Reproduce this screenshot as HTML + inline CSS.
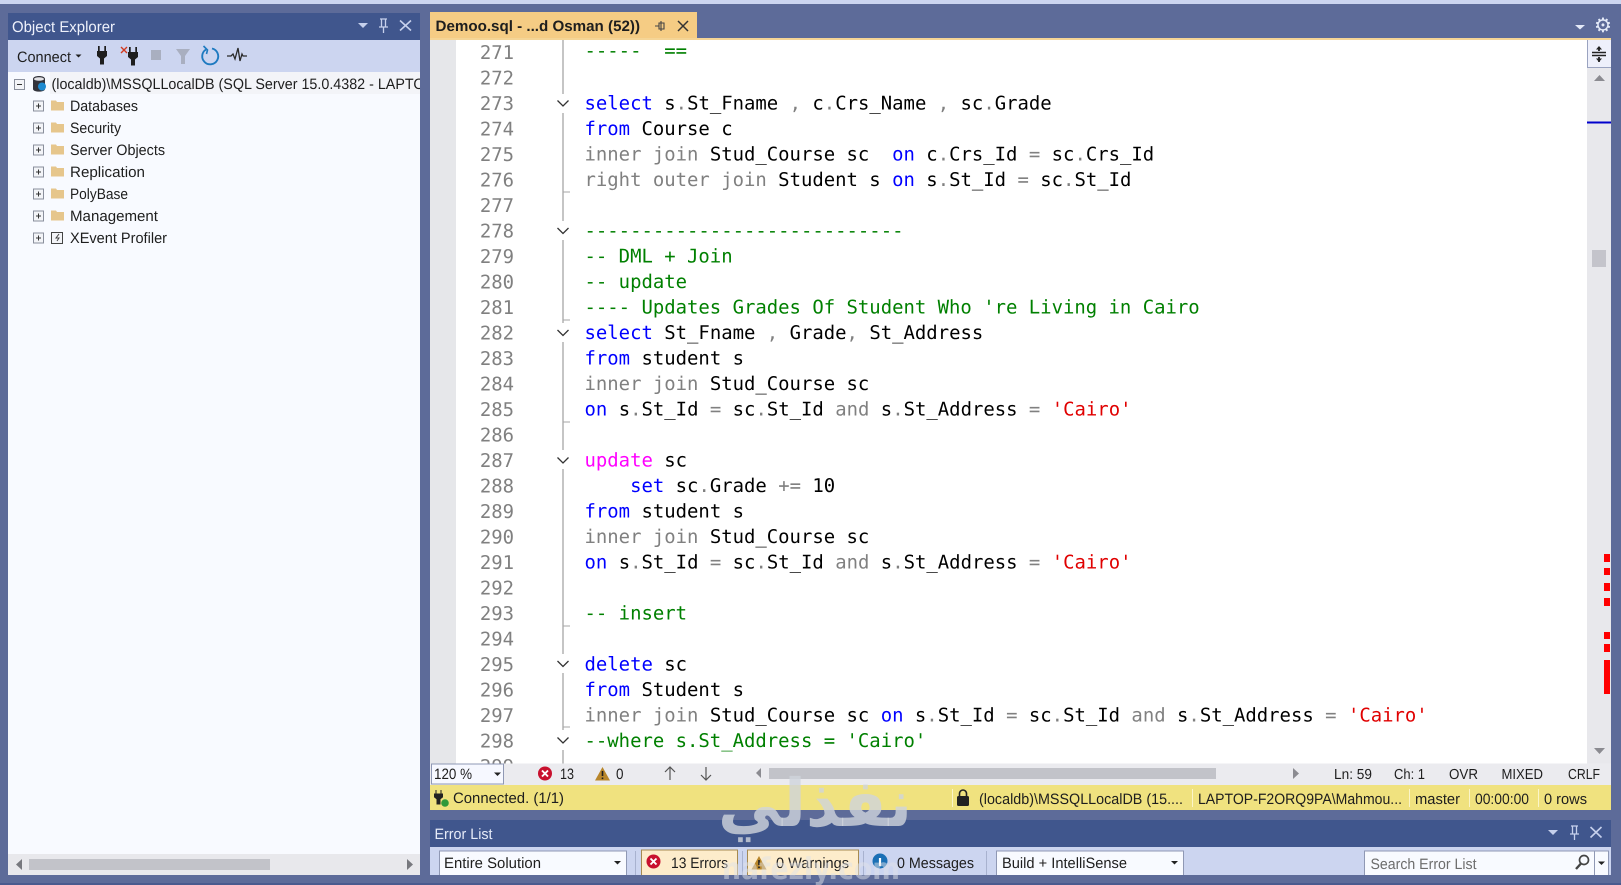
<!DOCTYPE html>
<html><head><meta charset="utf-8"><style>
html,body{margin:0;padding:0;background:#5d6b99;overflow:hidden;width:1621px;height:885px}
svg{display:block}
text{font-family:"Liberation Sans",sans-serif;font-size:15px;fill:#1e1e1e;white-space:pre;text-rendering:geometricPrecision}
.m text,text.m{font-family:"DejaVu Sans Mono","Liberation Mono",monospace;font-size:18.93px;fill:#000}
.n{fill:#808080!important;text-anchor:end}
.k{fill:#0000ff}.g{fill:#808080}.c{fill:#008000}.r{fill:#e00000}.p{fill:#ff00ff}
</style></head><body>
<svg width="1621" height="885" viewBox="0 0 1621 885" xmlns="http://www.w3.org/2000/svg">
<defs>
<clipPath id="oe"><rect x="8" y="72" width="412" height="30"/></clipPath>
<clipPath id="ed"><rect x="430" y="40" width="1157" height="723.5"/></clipPath>
<clipPath id="tb"><rect x="430" y="847" width="1181" height="28"/></clipPath>
<g id="plus"><rect x="0.5" y="0.5" width="10" height="10" fill="#f3f4f8" stroke="#8a8f9c"/><path d="M3 5.5h5M5.5 3v5" stroke="#333"/></g>
<path id="folder" d="M0 2h5l1 1.5h7v8.500H0z" fill="#e6c68c"/>
<path id="plug" d="M-4-9h1.700v5h-1.700zM2.300-9h1.700v5h-1.700zM-5-4h10v5l-3 2.500v6h-4v-6l-3-2.500z" fill="#1e1e1e"/>
<g id="err"><circle r="7" fill="#c8102e"/><path d="M-3-3L3 3M3-3L-3 3" stroke="#fff" stroke-width="1.900"/></g>
<g id="warn"><path d="M0-7L7.500 6.500H-7.500z" fill="#b8862b"/><path d="M0-3v5M0 3.500v1.600" stroke="#1e1e1e" stroke-width="1.600"/></g>
</defs>

<rect width="1621" height="885" fill="#5d6b99"/>
<rect width="1621" height="4" fill="#ccd5f0"/>
<rect y="883" width="1621" height="2" fill="#4a5a8e"/>

<!-- Object Explorer -->
<rect x="8" y="13" width="412" height="27" fill="#40568d"/>
<text x="12" y="32" textLength="103" lengthAdjust="spacingAndGlyphs" style="fill:#eef1fb;font-size:15.500px">Object Explorer</text>
<path d="M358 23h10l-5 5z" fill="#c6d0ec"/>
<path d="M380 19h7M381.500 19v8M385.500 19v8M379 27h9M383.500 27v6" stroke="#c6d0ec" stroke-width="1.300" fill="none"/>
<path d="M400 20.500l11 10M411 20.500l-11 10" stroke="#c6d0ec" stroke-width="1.600"/>
<rect x="8" y="40" width="412" height="32" fill="#ccd5f0"/>
<text x="17" y="62" textLength="54" lengthAdjust="spacingAndGlyphs">Connect</text>
<path d="M75.500 54.500h6l-3 3z" fill="#1e1e1e"/>
<use href="#plug" x="102" y="55"/>
<use href="#plug" x="133" y="56"/>
<path d="M121 47l6 6M127 47l-6 6" stroke="#d03a20" stroke-width="1.400"/>
<rect x="151" y="50" width="10" height="10" fill="#a9afc0"/>
<path d="M176 49h14l-5 7v8h-4v-8z" fill="#a9afc0"/>
<path d="M206 49.500a8 8 0 1 0 6 -1" fill="none" stroke="#1e7ac0" stroke-width="1.900"/>
<path d="M203.500 46l4 4-1 4" fill="none" stroke="#1e7ac0" stroke-width="1.600"/>
<path d="M227 56h4l2-2 2 5 3-11 2 13 2-7 1 2h4" fill="none" stroke="#2a2a2a" stroke-width="1.300"/>

<rect x="8" y="72" width="412" height="782" fill="#f8faff"/>
<rect x="50" y="72" width="370" height="22" fill="#f3f4f8"/>
<rect x="14.500" y="79.500" width="10" height="10" fill="#f3f4f8" stroke="#8a8f9c"/><path d="M17 84.500h5" stroke="#333"/>
<path d="M33 79c0-4 12-4 12 0v10c0 3.500-12 3.500-12 0z" fill="#33343c"/><ellipse cx="39" cy="79" rx="5" ry="1.800" fill="#e2e2e6"/><circle cx="42" cy="86.500" r="4" fill="#1e8ad0"/>
<g clip-path="url(#oe)"><text x="51.500" y="89" textLength="373" lengthAdjust="spacingAndGlyphs">(localdb)\MSSQLLocalDB (SQL Server 15.0.4382 - LAPTO</text></g>
<use href="#plus" x="33" y="100.500"/><use href="#folder" x="51" y="98.500"/><text x="70" y="111" textLength="68" lengthAdjust="spacingAndGlyphs">Databases</text>
<use href="#plus" x="33" y="122.500"/><use href="#folder" x="51" y="120.500"/><text x="70" y="133" textLength="51" lengthAdjust="spacingAndGlyphs">Security</text>
<use href="#plus" x="33" y="144.500"/><use href="#folder" x="51" y="142.500"/><text x="70" y="155" textLength="95" lengthAdjust="spacingAndGlyphs">Server Objects</text>
<use href="#plus" x="33" y="166.500"/><use href="#folder" x="51" y="164.500"/><text x="70" y="177" textLength="75" lengthAdjust="spacingAndGlyphs">Replication</text>
<use href="#plus" x="33" y="188.500"/><use href="#folder" x="51" y="186.500"/><text x="70" y="199" textLength="58" lengthAdjust="spacingAndGlyphs">PolyBase</text>
<use href="#plus" x="33" y="210.500"/><use href="#folder" x="51" y="208.500"/><text x="70" y="221" textLength="88" lengthAdjust="spacingAndGlyphs">Management</text>
<use href="#plus" x="33" y="232.500"/><rect x="51.500" y="232.500" width="11" height="11" fill="#f3f4f8" stroke="#444"/><path d="M59 234l-3 4h3l-2 3" fill="none" stroke="#444"/><text x="70" y="243" textLength="97" lengthAdjust="spacingAndGlyphs">XEvent Profiler</text>

<rect x="8" y="854" width="412" height="21" fill="#e8e8ec"/>
<rect x="29" y="859" width="241" height="11" fill="#c2c3c9"/>
<path d="M22 859v11l-6-5.500z" fill="#77787e"/><path d="M407 859v11l6-5.500z" fill="#77787e"/>

<!-- Tab -->
<rect x="430" y="12" width="267" height="28" fill="#f5cc84"/>
<rect x="430" y="38" width="1181" height="2" fill="#f5d596"/>
<text x="435.500" y="31" textLength="204.500" lengthAdjust="spacingAndGlyphs" style="font-weight:bold">Demoo.sql - ...d Osman (52))</text>
<path d="M655 26h4M659 23v6h5v-6zM661 21v10" fill="none" stroke="#444" stroke-width="1.100"/>
<path d="M678 21l10 10M688 21l-10 10" stroke="#333" stroke-width="1.500"/>
<path d="M1575 25h10l-5 4.500z" fill="#e4eaf8"/>
<text x="1603" y="32" text-anchor="middle" style="fill:#e4eaf8;font-size:20px;font-family:'DejaVu Sans',sans-serif">⚙</text>

<!-- Editor -->
<rect x="430" y="40" width="1157" height="724" fill="#fff"/>
<rect x="430" y="40" width="26" height="724" fill="#e6e7ea"/>
<rect x="1587" y="40" width="24" height="724" fill="#e8e8ec"/>
<rect x="1587" y="40" width="24" height="27" fill="#eef0fb"/>
<path d="M1587.500 40v27M1587 67.500h24" stroke="#9aa3c0"/>
<path d="M1592 52.500h14M1592 55.500h14" stroke="#222" stroke-width="1.500"/>
<path d="M1599 47v4M1599 57v5" stroke="#222" stroke-width="1.800"/><path d="M1596 49.500l3-3.500 3 3.500zM1596 58.500l3 3.500 3-3.500z" fill="#222"/>
<path d="M1594 81l5.500-6 5.500 6z" fill="#8b8b91"/>
<rect x="1587" y="121.500" width="24" height="2" fill="#0000cc"/>
<rect x="1592" y="250" width="14" height="17" fill="#c4c4cb"/>
<g fill="#ff0000"><rect x="1604" y="554" width="6" height="8"/><rect x="1604" y="568" width="6" height="7"/><rect x="1604" y="583" width="6" height="8"/><rect x="1604" y="598" width="6" height="8"/><rect x="1604" y="632" width="6" height="7"/><rect x="1604" y="644" width="6" height="8"/><rect x="1604" y="660" width="6" height="34"/></g>
<path d="M1594 748l5.500 6 5.500-6z" fill="#8b8b91"/>

<g clip-path="url(#ed)" class="m">
<path d="M563 40V94M563 113V221M563 240V323M563 342V450M563 469V654M563 673V730M563 750V764" stroke="#a6a6a6" stroke-width="1.300" fill="none"/>
<path d="M563 192h7M563 320h7M563 422h7M563 626h7M563 727h7" stroke="#a6a6a6"/>
<path d="M557.500 100.500l5.500 5.500 5.500-5.500M557.500 228l5.500 5.500 5.500-5.500M557.500 330l5.500 5.500 5.500-5.500M557.500 457.500l5.500 5.500 5.500-5.500M557.500 661l5.500 5.500 5.500-5.500M557.500 737.500l5.500 5.500 5.500-5.500" fill="none" stroke="#333" stroke-width="1.300"/>

<text class="n" x="514" y="59">271</text>
<text class="n" x="514" y="84.500">272</text>
<text class="n" x="514" y="110">273</text>
<text class="n" x="514" y="135.500">274</text>
<text class="n" x="514" y="161">275</text>
<text class="n" x="514" y="186.500">276</text>
<text class="n" x="514" y="212">277</text>
<text class="n" x="514" y="237.500">278</text>
<text class="n" x="514" y="263">279</text>
<text class="n" x="514" y="288.500">280</text>
<text class="n" x="514" y="314">281</text>
<text class="n" x="514" y="339.500">282</text>
<text class="n" x="514" y="365">283</text>
<text class="n" x="514" y="390.500">284</text>
<text class="n" x="514" y="416">285</text>
<text class="n" x="514" y="441.500">286</text>
<text class="n" x="514" y="467">287</text>
<text class="n" x="514" y="492.500">288</text>
<text class="n" x="514" y="518">289</text>
<text class="n" x="514" y="543.500">290</text>
<text class="n" x="514" y="569">291</text>
<text class="n" x="514" y="594.500">292</text>
<text class="n" x="514" y="620">293</text>
<text class="n" x="514" y="645.500">294</text>
<text class="n" x="514" y="671">295</text>
<text class="n" x="514" y="696.500">296</text>
<text class="n" x="514" y="722">297</text>
<text class="n" x="514" y="747.500">298</text>
<text class="n" x="514" y="773">299</text>

<text x="584.500" y="57"><tspan class="c">-----  ==</tspan></text>
<text x="584.500" y="109.300"><tspan class="k">select</tspan> s<tspan class="g">.</tspan>St_Fname <tspan class="g">,</tspan> c<tspan class="g">.</tspan>Crs_Name <tspan class="g">,</tspan> sc<tspan class="g">.</tspan>Grade</text>
<text x="584.500" y="134.800"><tspan class="k">from</tspan> Course c</text>
<text x="584.500" y="160.300"><tspan class="g">inner join</tspan> Stud_Course sc  <tspan class="k">on</tspan> c<tspan class="g">.</tspan>Crs_Id <tspan class="g">=</tspan> sc<tspan class="g">.</tspan>Crs_Id</text>
<text x="584.500" y="185.800"><tspan class="g">right outer join</tspan> Student s <tspan class="k">on</tspan> s<tspan class="g">.</tspan>St_Id <tspan class="g">=</tspan> sc<tspan class="g">.</tspan>St_Id</text>
<text x="584.500" y="236.800"><tspan class="c">----------------------------</tspan></text>
<text x="584.500" y="262.300"><tspan class="c">-- DML + Join</tspan></text>
<text x="584.500" y="287.800"><tspan class="c">-- update</tspan></text>
<text x="584.500" y="313.300"><tspan class="c">---- Updates Grades Of Student Who 're Living in Cairo</tspan></text>
<text x="584.500" y="338.800"><tspan class="k">select</tspan> St_Fname <tspan class="g">,</tspan> Grade<tspan class="g">,</tspan> St_Address</text>
<text x="584.500" y="364.300"><tspan class="k">from</tspan> student s</text>
<text x="584.500" y="389.800"><tspan class="g">inner join</tspan> Stud_Course sc</text>
<text x="584.500" y="415.300"><tspan class="k">on</tspan> s<tspan class="g">.</tspan>St_Id <tspan class="g">=</tspan> sc<tspan class="g">.</tspan>St_Id <tspan class="g">and</tspan> s<tspan class="g">.</tspan>St_Address <tspan class="g">=</tspan> <tspan class="r">'Cairo'</tspan></text>
<text x="584.500" y="466.300"><tspan class="p">update</tspan> sc</text>
<text x="584.500" y="491.800">    <tspan class="k">set</tspan> sc<tspan class="g">.</tspan>Grade <tspan class="g">+=</tspan> 10</text>
<text x="584.500" y="517.300"><tspan class="k">from</tspan> student s</text>
<text x="584.500" y="542.800"><tspan class="g">inner join</tspan> Stud_Course sc</text>
<text x="584.500" y="568.300"><tspan class="k">on</tspan> s<tspan class="g">.</tspan>St_Id <tspan class="g">=</tspan> sc<tspan class="g">.</tspan>St_Id <tspan class="g">and</tspan> s<tspan class="g">.</tspan>St_Address <tspan class="g">=</tspan> <tspan class="r">'Cairo'</tspan></text>
<text x="584.500" y="619.300"><tspan class="c">-- insert</tspan></text>
<text x="584.500" y="670.300"><tspan class="k">delete</tspan> sc</text>
<text x="584.500" y="695.800"><tspan class="k">from</tspan> Student s</text>
<text x="584.500" y="721.300"><tspan class="g">inner join</tspan> Stud_Course sc <tspan class="k">on</tspan> s<tspan class="g">.</tspan>St_Id <tspan class="g">=</tspan> sc<tspan class="g">.</tspan>St_Id <tspan class="g">and</tspan> s<tspan class="g">.</tspan>St_Address <tspan class="g">=</tspan> <tspan class="r">'Cairo'</tspan></text>
<text x="584.500" y="746.800"><tspan class="c">--where s.St_Address = 'Cairo'</tspan></text>
</g>

<!-- editor bottom bar -->
<rect x="430" y="763.500" width="1181" height="21.500" fill="#ebebef"/>
<rect x="431.500" y="764" width="72" height="20" fill="#f6f8ff" stroke="#8f98b4"/>
<text x="434" y="779" textLength="38" lengthAdjust="spacingAndGlyphs">120 %</text>
<path d="M494 772.500h7l-3.500 3.500z" fill="#222"/>
<use href="#err" x="545" y="773.500"/>
<text x="560" y="779" textLength="14" lengthAdjust="spacingAndGlyphs">13</text>
<use href="#warn" x="602.500" y="774"/>
<text x="616" y="779" textLength="7.500" lengthAdjust="spacingAndGlyphs">0</text>
<path d="M670 780v-13M665 772l5-5 5 5M706 767v13M701 775l5 5 5-5" fill="none" stroke="#555" stroke-width="1.200"/>
<path d="M761 768v10l-5-5z" fill="#8b8b91"/>
<rect x="769" y="768" width="447" height="11" fill="#c2c3c9"/>
<path d="M1293 768v11l6-5.500z" fill="#8b8b91"/>
<text x="1334" y="779" textLength="38" lengthAdjust="spacingAndGlyphs" style="font-size:14.500px">Ln: 59</text>
<text x="1394" y="779" textLength="31" lengthAdjust="spacingAndGlyphs" style="font-size:14.500px">Ch: 1</text>
<text x="1449" y="779" textLength="29" lengthAdjust="spacingAndGlyphs" style="font-size:14.500px">OVR</text>
<text x="1501.500" y="779" textLength="41.500" lengthAdjust="spacingAndGlyphs" style="font-size:14.500px">MIXED</text>
<text x="1568" y="779" textLength="32" lengthAdjust="spacingAndGlyphs" style="font-size:14.500px">CRLF</text>

<!-- yellow status -->
<rect x="430" y="785" width="1181" height="25" fill="#f0e27f"/>
<path d="M436 790v4M441 790v4M434.500 794h8v3l-2.500 2v5h-3v-5l-2.500-2z" fill="#222" stroke="#222"/>
<circle cx="445" cy="803" r="3.800" fill="#2e9a3a"/>
<text x="453" y="803" textLength="111" lengthAdjust="spacingAndGlyphs">Connected. (1/1)</text>
<path d="M952.500 789v18M1192.500 789v18M1409.500 789v18M1469.500 789v18M1538.500 789v18" stroke="#fbf5c8"/>
<rect x="957" y="796" width="12" height="10" rx="1.500" fill="#222"/><path d="M959.500 796v-2.500a3.500 3.500 0 0 1 7 0v2.500" fill="none" stroke="#222" stroke-width="1.600"/>
<text x="979" y="804" textLength="204" lengthAdjust="spacingAndGlyphs">(localdb)\MSSQLLocalDB (15....</text>
<text x="1198" y="804" textLength="204" lengthAdjust="spacingAndGlyphs">LAPTOP-F2ORQ9PA\Mahmou...</text>
<text x="1415" y="804" textLength="45" lengthAdjust="spacingAndGlyphs">master</text>
<text x="1475" y="804" textLength="54" lengthAdjust="spacingAndGlyphs">00:00:00</text>
<text x="1544" y="804" textLength="43" lengthAdjust="spacingAndGlyphs">0 rows</text>

<!-- Error list -->
<rect x="430" y="820" width="1181" height="27" fill="#40568d"/>
<text x="434.500" y="839" textLength="58" lengthAdjust="spacingAndGlyphs" style="fill:#e6ebf8">Error List</text>
<path d="M1548 830h10l-5 5z" fill="#c6d0ec"/>
<path d="M1571 826h7M1572.500 826v8M1576.500 826v8M1570 834h9M1574.500 834v6" stroke="#c6d0ec" stroke-width="1.300" fill="none"/>
<path d="M1590.500 827l11 10.500M1601.500 827l-11 10.500" stroke="#c6d0ec" stroke-width="1.600"/>
<rect x="430" y="847" width="1181" height="28" fill="#ccd5f0"/>
<g clip-path="url(#tb)">
<rect x="439.500" y="851" width="187" height="30" fill="#f8faff" stroke="#8f98b4"/>
<text x="444" y="868" textLength="97" lengthAdjust="spacingAndGlyphs">Entire Solution</text>
<path d="M614 861h7l-3.500 3.500z" fill="#222"/>
<path d="M635.500 851v24M742.500 851v24M863.500 851v24M986.500 851v24" stroke="#a8b2cf"/>
<rect x="641.500" y="850" width="96" height="30" fill="#fdeccb" stroke="#a68a50"/>
<use href="#err" x="653.500" y="861.500"/>
<text x="671" y="868" textLength="57" lengthAdjust="spacingAndGlyphs">13 Errors</text>
<rect x="747.500" y="850" width="111" height="30" fill="#fdeccb" stroke="#a68a50"/>
<use href="#warn" x="759" y="863"/>
<text x="776" y="868" textLength="73" lengthAdjust="spacingAndGlyphs">0 Warnings</text>
<circle cx="880" cy="861" r="7.500" fill="#1a6fb5"/><path d="M880 858v8" stroke="#fff" stroke-width="2.200"/>
<text x="897" y="868" textLength="77" lengthAdjust="spacingAndGlyphs">0 Messages</text>
<rect x="996.500" y="851" width="187" height="30" fill="#f8faff" stroke="#8f98b4"/>
<text x="1002" y="868" textLength="125" lengthAdjust="spacingAndGlyphs">Build + IntelliSense</text>
<path d="M1171 861h7l-3.500 3.500z" fill="#222"/>
<rect x="1364.500" y="851" width="244" height="30" fill="#f8faff" stroke="#8f98b4"/>
<text x="1370.500" y="869" textLength="106" lengthAdjust="spacingAndGlyphs" style="fill:#6d6d6d">Search Error List</text>
<circle cx="1584" cy="860" r="4.500" fill="none" stroke="#444" stroke-width="1.700"/><path d="M1581 863.500l-5 5.500" stroke="#444" stroke-width="2.400"/>
<path d="M1594.500 851v24" stroke="#8f98b4"/>
<path d="M1598 861.500h7l-3.500 3.500z" fill="#222"/>
</g>

<!-- Watermark -->
<text x="912" y="826" textLength="194" lengthAdjust="spacingAndGlyphs" direction="rtl" style="font-family:'DejaVu Sans',sans-serif;font-weight:bold;font-size:66px;fill:#d0d4dc;fill-opacity:.8" text-anchor="start" unicode-bidi="plaintext">نفذلي</text>
<text x="722" y="879" textLength="178" lengthAdjust="spacingAndGlyphs" style="font-family:'DejaVu Sans',sans-serif;font-weight:bold;font-size:30px;fill:#dfe2e8;fill-opacity:.5">nafezly.com</text>
</svg>
</body></html>
